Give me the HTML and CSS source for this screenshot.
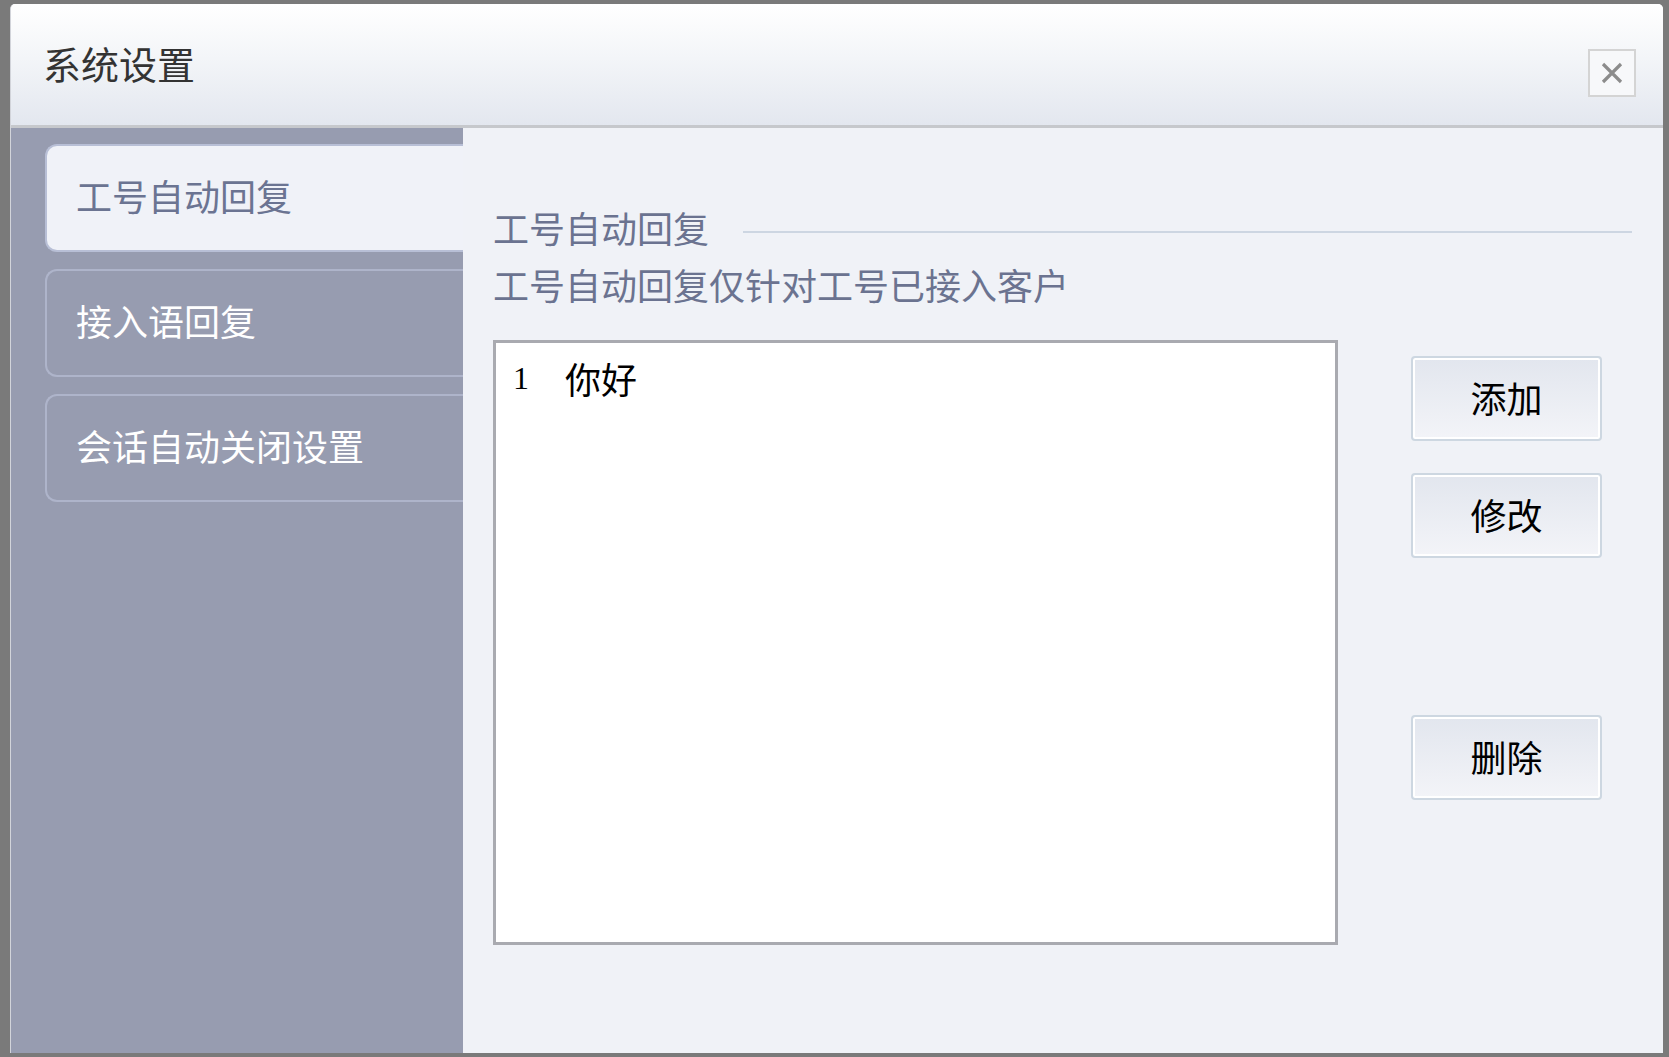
FILE: index.html
```html
<!DOCTYPE html>
<html lang="zh-CN">
<head>
    <meta charset="UTF-8">
    <meta name="viewport" content="width=device-width, initial-scale=1.0">
    <title>系统设置</title>
    <link rel="stylesheet" href="styles.css">
</head>
<body>
    <div class="window">
        <div class="title-bar">
            <div class="title">系统设置</div>
            <div class="close-btn">
                <svg width="24" height="24" viewBox="0 0 24 24">
                    <path d="M3 3 L21 21 M21 3 L3 21" stroke="#8c8c8c" stroke-width="3.2" fill="none"/>
                </svg>
            </div>
        </div>
        <div class="main">
            <div class="sidebar">
                <div class="tab active">工号自动回复</div>
                <div class="tab">接入语回复</div>
                <div class="tab">会话自动关闭设置</div>
            </div>
            <div class="content">
                <div class="group-head">
                    <span class="group-title">工号自动回复</span>
                    <span class="group-line"></span>
                </div>
                <div class="desc">工号自动回复仅针对工号已接入客户</div>
                <div class="panel">
                    <div class="reply-list">
                        <div class="reply-item">
                            <span class="num">1</span>
                            <span class="text">你好</span>
                        </div>
                    </div>
                    <div class="actions">
                        <button class="btn">添加</button>
                        <button class="btn">修改</button>
                        <button class="btn btn-delete">删除</button>
                    </div>
                </div>
            </div>
        </div>
    </div>
</body>
</html>
```

FILE: styles.css
```css
html, body {
    margin: 0;
    height: 100%;
}
body {
    box-sizing: border-box;
    padding: 4px 6px 4px 10px;
    display: flex;
    background: #7a7a7a;
    font-family: "Noto Sans CJK SC", sans-serif;
}
.window {
    flex: 1;
    display: flex;
    flex-direction: column;
    border-left: 1px solid #d2d4da;
    border-radius: 5px 5px 0 0;
    overflow: hidden;
    background: #f0f2f7;
}
.title-bar {
    height: 121px;
    flex-shrink: 0;
    display: flex;
    justify-content: space-between;
    align-items: flex-start;
    padding: 0 27px 0 32px;
    background: linear-gradient(#ffffff, #f3f5f8 45%, #e3e7ef);
    border-bottom: 3px solid #c6c8cc;
}
.title {
    margin-top: 40px;
    font-size: 38px;
    line-height: 1;
    color: #333;
}
.close-btn {
    margin-top: 45px;
    width: 44px;
    height: 44px;
    border: 2px solid #d4d4d4;
    background: #f7f8fa;
    display: flex;
    justify-content: center;
    align-items: center;
}
.main {
    flex: 1;
    display: flex;
}
.sidebar {
    width: 452px;
    flex-shrink: 0;
    box-sizing: border-box;
    padding: 16px 0 0 34px;
    background: #979cb0;
    display: flex;
    flex-direction: column;
    gap: 17px;
}
.tab {
    height: 108px;
    box-sizing: border-box;
    display: flex;
    align-items: center;
    padding: 0 0 6px 29px;
    border: 2px solid #aeb4ca;
    border-right: none;
    border-radius: 12px 0 0 12px;
    color: #fff;
    font-size: 36px;
    line-height: 1;
}
.tab.active {
    background: #f0f2f8;
    border-color: #b8bfd6;
    color: #6b7492;
}
.content {
    flex: 1;
    padding: 0 31px 0 30px;
    color: #6b7390;
}
.group-head {
    display: flex;
    margin-top: 81px;
}
.group-title {
    font-size: 36px;
    line-height: 1;
}
.group-line {
    flex: 1;
    height: 2px;
    margin: 22px 0 0 34px;
    background: #cdd6e2;
}
.desc {
    margin-top: 21px;
    font-size: 36px;
    line-height: 1;
}
.panel {
    display: flex;
    margin-top: 38px;
}
.reply-list {
    width: 845px;
    height: 605px;
    box-sizing: border-box;
    border: 3px solid #a9aab0;
    background: #fff;
    padding: 17px 0 0 17px;
}
.reply-item {
    display: flex;
    align-items: center;
    color: #000;
    line-height: 1;
}
.num {
    width: 52px;
    font-family: "Liberation Serif", serif;
    font-size: 32px;
}
.text {
    font-size: 36px;
}
.actions {
    display: flex;
    flex-direction: column;
    margin-left: 73px;
    padding-top: 16px;
}
.btn {
    width: 191px;
    height: 85px;
    margin-bottom: 32px;
    border: 2px solid #cdd7e1;
    border-radius: 4px;
    box-shadow: inset 0 0 0 2px #fff;
    background: linear-gradient(#e2e6ee, #f3f4f8);
    font-family: "Noto Sans CJK SC", sans-serif;
    font-size: 36px;
    line-height: 1;
    color: #000;
    padding: 0 0 4px;
}
.btn-delete {
    margin-top: 125px;
}
```
